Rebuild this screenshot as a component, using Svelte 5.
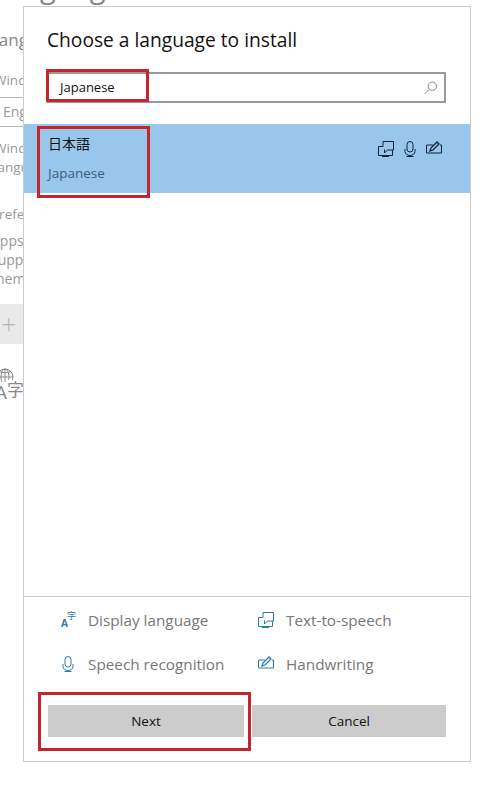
<script>
    let legend = [
        ['lang', 'Display language'],
        ['speech', 'Text-to-speech'],
        ['mic', 'Speech recognition'],
        ['pen', 'Handwriting'],
    ];
</script>

{#snippet icon(name)}
    {#if name === 'lang'}
        <span class="glyph"><span class="big-a">A</span><span class="zi">字</span></span>
    {:else}
        <svg class="icon" viewBox="0 0 16 16" fill="none" stroke="currentColor" stroke-width="1">
            {#if name === 'speech'}
                <path d="M5 5.500H.5v9h14V9M7.500 14.500V16M4 15.500h7" />
                <path d="M5 5.500V.5h10.500V9H9.500L6.500 12V8.500" />
            {:else if name === 'mic'}
                <rect x="5" y=".5" width="6" height="10.500" rx="3" />
                <path d="M3 8v2.500a5 4 0 0 0 10 0V8M8 14.500V16M4.500 15.500h7" />
            {:else}
                <path d="M7 4H.5v8h15V4h-1.500" />
                <path d="M4 10l1-3 6-6 2 2-6 6z" stroke-width="1.300" />
            {/if}
        </svg>
    {/if}
{/snippet}

<div class="page">
    <div class="behind">
        <div class="h1">Language</div>
        <div class="h2">Language</div>
        <div class="muted first">Windows display</div>
        <div class="select">English</div>
        <div class="muted para">Windows features<br />language</div>
        <div class="h3">Preferred</div>
        <div class="para2">Apps and websites<br />support them<br />them</div>
        <div class="add">+</div>
        <div class="bg-icon">
            <svg width="20" height="20" viewBox="0 0 20 20" fill="none" stroke="#8a8a8a" stroke-width="1">
                <circle cx="5" cy="9" r="8" />
                <path d="M-3 9h16M5 1v16M-1 3.500c4 1.500 8 1.500 12 0" />
                <ellipse cx="5" cy="9" rx="4" ry="8" />
            </svg>
            <span class="bg-a">A</span><span class="bg-zi">字</span>
        </div>
    </div>

    <div class="dialog">
        <h1>Choose a language to install</h1>
        <div class="search">
            <span class="query">Japanese</span>
            <svg class="loupe" viewBox="0 0 16 16" fill="none" stroke="#777" stroke-width="1">
                <circle cx="9.500" cy="6" r="4.800" />
                <path d="M6 9.500L.8 14.800" />
            </svg>
        </div>
        <div class="list">
            <div class="row">
                <div class="names">
                    <div class="native">日本語</div>
                    <div class="english">Japanese</div>
                </div>
                <div class="caps">
                    {@render icon('speech')}
                    {@render icon('mic')}
                    {@render icon('pen')}
                </div>
            </div>
        </div>
        <div class="legend">
            {#each legend as [name, label]}
                <div class="item">
                    {@render icon(name)}
                    <span class="label">{label}</span>
                </div>
            {/each}
        </div>
        <div class="actions">
            <button class="next">Next</button>
            <button class="cancel">Cancel</button>
        </div>
    </div>

    <div class="mark mark-search"></div>
    <div class="mark mark-row"></div>
    <div class="mark mark-next"></div>
</div>

<style>
    :global(body) {
        background: #fff;
        overflow: hidden;
    }

    .page {
        position: relative;
        width: 500px;
        height: 787px;
        overflow: hidden;
        font-family: "Open Sans", "Noto Sans CJK JP", sans-serif;
    }

    .behind {
        width: 60px;
        display: flex;
        flex-direction: column;
        align-items: flex-start;
        white-space: nowrap;
        color: #999;
    }

    .h1 {
        margin: -38px 0 0 -9px;
        height: 50px;
        font-size: 29px;
        line-height: 50px;
        color: #888;
    }

    .h2 {
        margin: 13px 0 0 -10px;
        height: 30px;
        font-size: 17px;
        line-height: 30px;
        color: #888;
    }

    .muted {
        font-size: 13.500px;
        line-height: 19px;
    }

    .first {
        margin: 16px 0 0 -6px;
    }

    .select {
        margin-top: 7px;
        padding-left: 3px;
        width: 100%;
        box-sizing: border-box;
        height: 30px;
        border-top: 1px solid #bbb;
        border-bottom: 1px solid #bbb;
        font-size: 14px;
        line-height: 28px;
    }

    .para {
        margin: 12px 0 0 -6px;
    }

    .h3 {
        margin: 27px 0 0 -9px;
        font-size: 13.500px;
        line-height: 20px;
    }

    .para2 {
        margin: 7px 0 0 -9px;
        font-size: 14px;
        line-height: 19px;
    }

    .add {
        margin-top: 16px;
        width: 100%;
        height: 40px;
        padding-left: 1px;
        box-sizing: border-box;
        background: #e9e9e9;
        color: #b5b5b5;
        font-size: 27px;
        font-weight: 300;
        line-height: 40px;
    }

    .bg-icon {
        position: relative;
        margin-top: 24px;
        height: 32px;
        width: 30px;
    }

    .bg-icon svg {
        display: block;
        overflow: hidden;
    }

    .bg-a {
        position: absolute;
        left: -5px;
        top: 14px;
        font-size: 19px;
        line-height: 20px;
        background: #fff;
        color: #8a8a8a;
    }

    .bg-zi {
        position: absolute;
        left: 7px;
        top: 12px;
        font-size: 17px;
        line-height: 20px;
        background: #fff;
        color: #8a8a8a;
    }

    .dialog {
        position: absolute;
        left: 23px;
        top: 6px;
        width: 448px;
        height: 756px;
        box-sizing: border-box;
        display: flex;
        flex-direction: column;
        background: #fff;
        border: 1px solid #ccc;
    }

    h1 {
        margin: 18px 0 0 23px;
        height: 30px;
        font-size: 19.200px;
        font-weight: 400;
        line-height: 30px;
        color: #111;
    }

    .search {
        margin: 17px 0 0 23px;
        width: 399px;
        height: 31px;
        box-sizing: border-box;
        display: flex;
        align-items: center;
        justify-content: space-between;
        padding: 0 6px 2px 11px;
        border: 2px solid #999;
    }

    .query {
        font-size: 13px;
        color: #111;
    }

    .loupe {
        width: 14px;
        height: 14px;
        margin-top: 2px;
    }

    .list {
        flex: 1;
        margin-top: 21px;
        border-bottom: 1px solid #ccc;
    }

    .row {
        height: 69px;
        display: flex;
        justify-content: space-between;
        background: #99c7ec;
        padding: 10px 28px 0 24px;
        box-sizing: border-box;
    }

    .native {
        font-size: 14px;
        line-height: 20px;
        color: #111;
    }

    .english {
        margin: 9px 0 0;
        font-size: 13.500px;
        line-height: 20px;
        color: #3f5d7a;
    }

    .caps {
        display: flex;
        gap: 8px;
        padding-top: 7px;
        color: #10213a;
    }

    .icon {
        width: 16px;
        height: 16px;
        flex: none;
    }

    .legend {
        display: grid;
        grid-template-columns: 198px 1fr;
        grid-auto-rows: 44px;
        padding: 1px 0 0 36px;
        color: #2a7da6;
    }

    .item {
        display: flex;
        align-items: center;
        gap: 12px;
    }

    .label {
        font-size: 15.300px;
        color: #777;
    }

    .glyph {
        position: relative;
        display: block;
        width: 16px;
        height: 16px;
        flex: none;
        color: #2a7da6;
    }

    .big-a {
        position: absolute;
        left: 1px;
        top: 5px;
        font-size: 10px;
        font-weight: 700;
        line-height: 12px;
    }

    .zi {
        position: absolute;
        left: 7px;
        top: -1px;
        font-size: 9px;
        line-height: 10px;
    }

    .actions {
        display: flex;
        gap: 8px;
        margin: 19px 0 24px 24px;
    }

    button {
        height: 32px;
        padding: 0;
        border: none;
        background: #ccc;
        font: inherit;
        font-size: 13.500px;
        color: #111;
    }

    .next {
        width: 196px;
    }

    .cancel {
        width: 194px;
    }

    .mark {
        position: absolute;
        box-sizing: border-box;
        border: 3px solid #c4262e;
    }

    .mark-search {
        left: 46px;
        top: 69px;
        width: 103px;
        height: 33px;
    }

    .mark-row {
        left: 37px;
        top: 126px;
        width: 113px;
        height: 72px;
    }

    .mark-next {
        left: 38px;
        top: 692px;
        width: 213px;
        height: 59px;
    }
</style>
